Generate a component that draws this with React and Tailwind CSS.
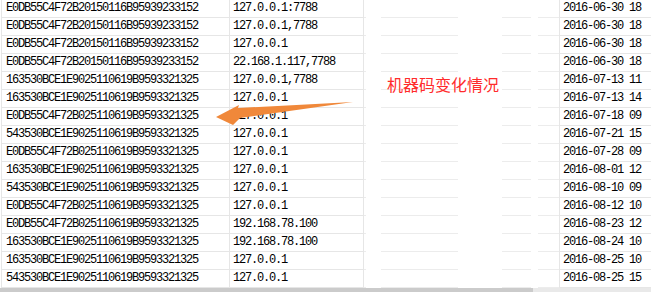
const rows = [
  ['E0DB55C4F72B20150116B95939233152', '127.0.0.1:7788', '2016-06-30 18'],
  ['E0DB55C4F72B20150116B95939233152', '127.0.0.1,7788', '2016-06-30 18'],
  ['E0DB55C4F72B20150116B95939233152', '127.0.0.1', '2016-06-30 18'],
  ['E0DB55C4F72B20150116B95939233152', '22.168.1.117,7788', '2016-06-30 18'],
  ['163530BCE1E9025110619B9593321325', '127.0.0.1,7788', '2016-07-13 11'],
  ['163530BCE1E9025110619B9593321325', '127.0.0.1', '2016-07-13 14'],
  ['E0DB55C4F72B025110619B9593321325', '127.0.0.1', '2016-07-18 09'],
  ['543530BCE1E9025110619B9593321325', '127.0.0.1', '2016-07-21 15'],
  ['E0DB55C4F72B025110619B9593321325', '127.0.0.1', '2016-07-28 09'],
  ['163530BCE1E9025110619B9593321325', '127.0.0.1', '2016-08-01 12'],
  ['543530BCE1E9025110619B9593321325', '127.0.0.1', '2016-08-10 09'],
  ['E0DB55C4F72B025110619B9593321325', '127.0.0.1', '2016-08-12 10'],
  ['E0DB55C4F72B025110619B9593321325', '192.168.78.100', '2016-08-23 12'],
  ['163530BCE1E9025110619B9593321325', '192.168.78.100', '2016-08-24 10'],
  ['163530BCE1E9025110619B9593321325', '127.0.0.1', '2016-08-25 10'],
  ['543530BCE1E9025110619B9593321325', '127.0.0.1', '2016-08-25 15'],
]

const cellText = "text-[12px] tracking-[-1.2px] text-black whitespace-nowrap leading-[17px] font-['Liberation_Mono',monospace]"

function Row({ code, ip, time }) {
  return (
    <div className="flex h-[18px]">
      <div className="w-px shrink-0" />
      {/* machine code */}
      <div className={`w-[229px] shrink-0 border-l border-r border-b border-[#e6e6e6] pl-[4px] ${cellText}`}>
        {code}
      </div>
      {/* ip */}
      <div className={`w-[134px] shrink-0 border-r border-b border-[#e6e6e6] pl-[3px] ${cellText}`}>
        {ip}
      </div>
      {/* blanked-out columns, only grid remnants left */}
      <div className="w-[196px] shrink-0 flex border-r border-[#e6e6e6]">
        <div className="w-[2px] border-b border-[#ececec]" />
        <div className="w-[15px]" />
        <div className="w-[77px] border-b border-[#ececec]" />
        <div className="w-[44px]" />
        <div className="w-[29px] border-b border-[#ececec]" />
        <div className="w-[7px]" />
        <div className="w-[21px] border-b border-[#ececec]" />
      </div>
      {/* time */}
      <div className={`flex-1 border-b border-[#e6e6e6] pl-[3px] ${cellText}`}>
        {time}
      </div>
    </div>
  )
}

export default function App() {
  return (
    <div className="relative w-[651px] h-[292px] overflow-hidden bg-white">
      <div className="flex flex-col">
        {rows.map((r, i) => (
          <Row key={i} code={r[0]} ip={r[1]} time={r[2]} />
        ))}
        {/* horizontal scrollbar */}
        <div className="flex h-[4px]">
          <div className="w-[533px] bg-[#cbcbcb]" />
          <div className="flex-1 bg-[#e9e9e9]" />
        </div>
      </div>

      {/* annotation */}
      <div className="absolute left-[387px] top-[75px] text-[16px] leading-[18px] text-[#ff2b2b] font-['Noto_Sans_CJK_SC',sans-serif]">
        机器码变化情况
      </div>
      <svg className="absolute left-0 top-0 pointer-events-none" width="651" height="292" viewBox="0 0 651 292">
        <polygon
          points="216,117 239,105 238,108 353,102 240,118 233,125"
          fill="#f0883a"
        />
      </svg>
    </div>
  )
}
